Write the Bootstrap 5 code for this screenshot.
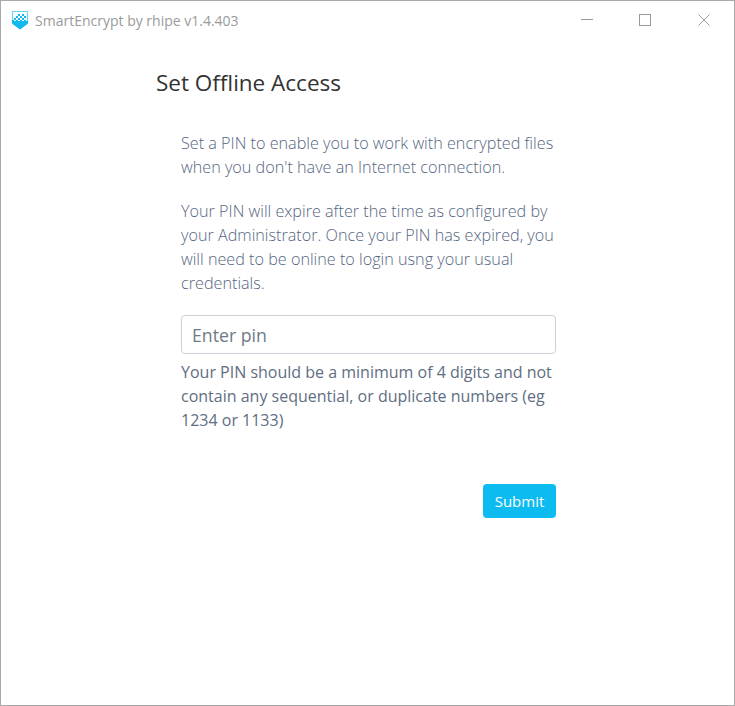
<!DOCTYPE html>
<html lang="en">
<head>
<meta charset="utf-8">
<title>SmartEncrypt by rhipe</title>
<link href="https://cdn.jsdelivr.net/npm/bootstrap@5.3.0/dist/css/bootstrap.min.css" rel="stylesheet">
<style>
html,body{height:100%;margin:0;background:#fff;overflow:hidden}
body{font-family:"Open Sans","Liberation Sans",sans-serif}
.app-window{height:706px;border:1px solid #a9a9a9}
.title-strip{height:39px;padding-left:10px}
.app-logo{margin-top:-2px}
.app-title{font-size:14px;color:#9a9a9a;margin-left:6px;margin-top:-1px}
.win-btns{margin-right:1px;align-self:flex-start}
.win-btn{width:58.5px;height:37px;display:flex;align-items:center;justify-content:center}
.page-col{width:400px;margin-left:155px}
.page-title{font-size:22.5px;font-weight:400;color:#333;line-height:30px;margin:28px 0 0}
.page-body{padding:33px 0 0 25px}
.intro{font-size:16.2px;font-weight:300;line-height:24px;color:#55667f;margin:0 0 20px}
.pin-input.form-control{height:39px;font-size:17.7px;font-weight:400;color:#6b7785;border:1px solid #ccd0d8;border-radius:4px;padding:0 10px}
.pin-input.form-control::placeholder{color:#6f7a87;opacity:1}
.hint{font-size:16px;line-height:24px;color:#5f6e82;margin:6px 0 0}
.submit-btn.btn{background:#0cbcf0;border:0;color:#fff;font-size:15px;font-weight:500;width:73px;height:34px;padding:0;border-radius:4px}
.submit-row{margin-top:52px}
</style>
</head>
<body>
<div class="app-window d-flex flex-column">
  <div class="title-strip d-flex align-items-center">
    <svg class="app-logo" width="18" height="20" viewBox="0 0 18 20" aria-hidden="true">
      <path d="M1.5 1.5H16.5V13L9 18.5L1.5 13Z" fill="#fff" stroke="#6fd3f2" stroke-width="1.2"/>
      <path d="M1 11H17V13.4L9 19.4L1 13.4Z" fill="#12b9ee"/>
      <g fill="#12b9ee">
        <rect x="7" y="4" width="2" height="2"/><rect x="11" y="4" width="2" height="2"/>
        <rect x="5" y="6" width="2" height="2"/><rect x="9" y="6" width="2" height="2"/><rect x="13" y="6" width="2" height="2"/>
        <rect x="3" y="8" width="2" height="2"/><rect x="7" y="8" width="2" height="2"/><rect x="11" y="8" width="2" height="2"/>
        <rect x="1" y="10" width="2" height="2"/><rect x="5" y="10" width="2" height="2"/><rect x="9" y="10" width="2" height="2"/><rect x="13" y="10" width="2" height="2"/>
      </g>
    </svg>
    <span class="app-title">SmartEncrypt by rhipe v1.4.403</span>
    <div class="win-btns d-flex ms-auto">
      <div class="win-btn"><svg width="12" height="12" viewBox="0 0 12 12" aria-hidden="true"><path d="M0 5.5H12" stroke="#999" fill="none"/></svg></div>
      <div class="win-btn"><svg width="12" height="12" viewBox="0 0 12 12" aria-hidden="true"><rect x=".5" y=".5" width="11" height="11" stroke="#999" fill="none"/></svg></div>
      <div class="win-btn"><svg width="12" height="12" viewBox="0 0 12 12" aria-hidden="true"><path d="M.5.5L11.5 11.5M11.5.5L.5 11.5" stroke="#999" fill="none"/></svg></div>
    </div>
  </div>
  <main class="page-col">
    <h1 class="page-title">Set Offline Access</h1>
    <div class="page-body">
      <p class="intro">Set a PIN to enable you to work with encrypted files when you don't have an Internet connection.</p>
      <p class="intro">Your PIN will expire after the time as configured by your Administrator. Once your PIN has expired, you will need to be online to login usng your usual credentials.</p>
      <input class="form-control pin-input" type="text" placeholder="Enter pin">
      <p class="hint">Your PIN should be a minimum of 4 digits and not contain any sequential, or duplicate numbers (eg 1234 or 1133)</p>
      <div class="submit-row d-flex justify-content-end">
        <button class="btn submit-btn" type="button">Submit</button>
      </div>
    </div>
  </main>
</div>
</body>
</html>
